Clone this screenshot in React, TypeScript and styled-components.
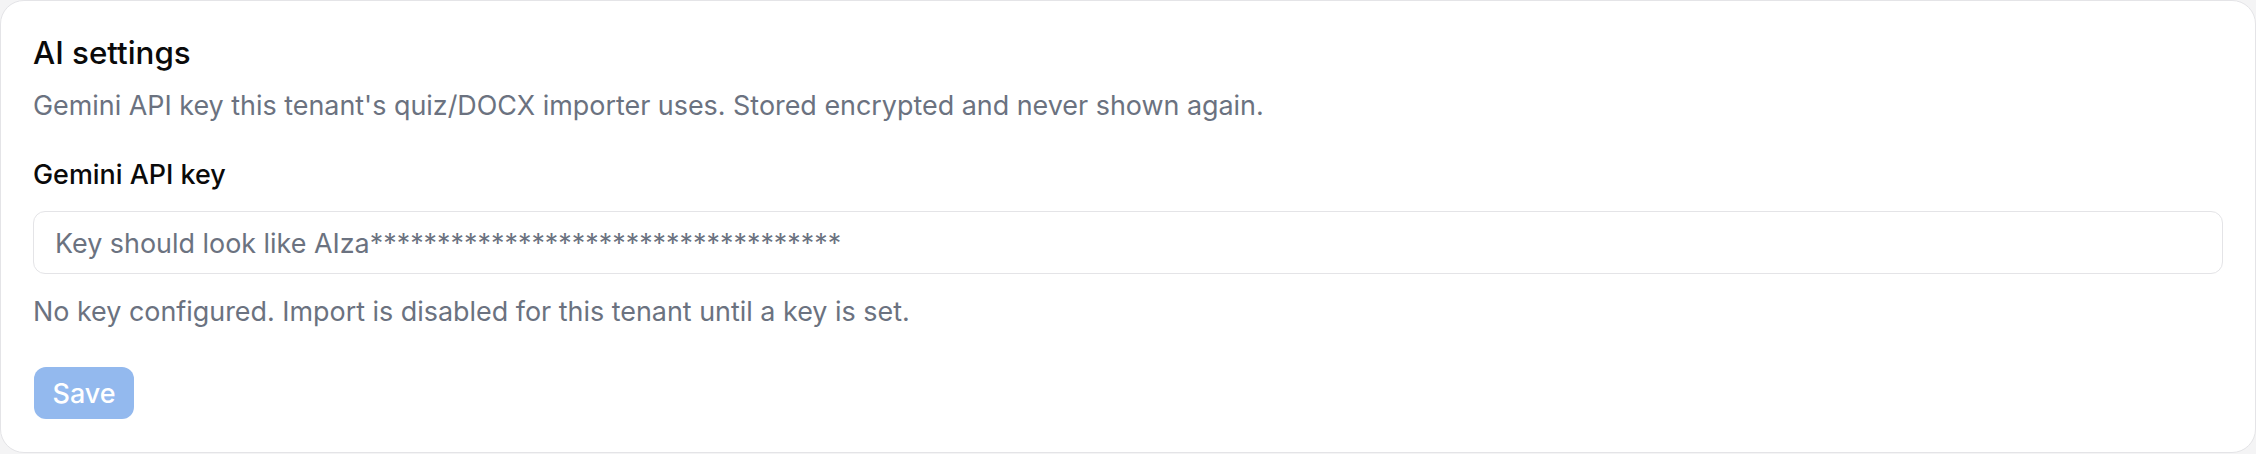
import React from "react";
import styled, { createGlobalStyle } from "styled-components";

const Global = createGlobalStyle`
  html, body { margin: 0; padding: 0; background: #f4f4f5; }
  body { font-family: Inter, "Noto Sans", sans-serif; }
`;

const Card = styled.section`
  box-sizing: border-box;
  width: 2256px;
  height: 453px;
  background: #ffffff;
  border: 1.5px solid #e4e4e7;
  border-radius: 24px;
  padding: 32px 32px 0 32px;
  display: flex;
  flex-direction: column;
`;

const Title = styled.h2`
  margin: 0;
  font-size: 31.3px;
  font-weight: 500;
  color: #0a0a0a;
  line-height: 40px;
`;

const Description = styled.p`
  margin: 12px 0 0 0;
  font-size: 26.9px;
  line-height: 40px;
  color: #6b7280;
`;

const Field = styled.div`
  display: flex;
  flex-direction: column;
  margin-top: 29px;
`;

const Label = styled.label`
  font-size: 26.9px;
  font-weight: 500;
  color: #0a0a0a;
  line-height: 40px;
`;

const Input = styled.input`
  box-sizing: border-box;
  margin-top: 17px;
  width: 100%;
  height: 63px;
  border: 1.5px solid #e4e4e7;
  border-radius: 12px;
  padding: 0 21px;
  font-family: inherit;
  font-size: 26.9px;
  color: #0a0a0a;
  background: #fff;
  outline: none;
  &::placeholder { color: #6b7280; }
`;

const Help = styled.p`
  margin: 17px 0 0 0;
  font-size: 26.9px;
  line-height: 40px;
  color: #6b7280;
`;

const SaveButton = styled.button`
  margin-top: 36px;
  margin-left: 1px;
  align-self: flex-start;
  width: 100px;
  height: 52px;
  border: none;
  border-radius: 12px;
  background: #93b9ee;
  color: #ffffff;
  font-family: inherit;
  font-size: 26.9px;
  font-weight: 500;
  padding: 0;
  cursor: not-allowed;
`;

export default function App() {
  return (
    <>
      <Global />
      <Card>
        <Title>AI settings</Title>
        <Description>
          Gemini API key this tenant's quiz/DOCX importer uses. Stored encrypted and never shown again.
        </Description>
        <Field>
          <Label htmlFor="gemini-key">Gemini API key</Label>
          <Input
            id="gemini-key"
            type="text"
            placeholder="Key should look like AIza***********************************"
          />
        </Field>
        <Help>No key configured. Import is disabled for this tenant until a key is set.</Help>
        <SaveButton disabled>Save</SaveButton>
      </Card>
    </>
  );
}
